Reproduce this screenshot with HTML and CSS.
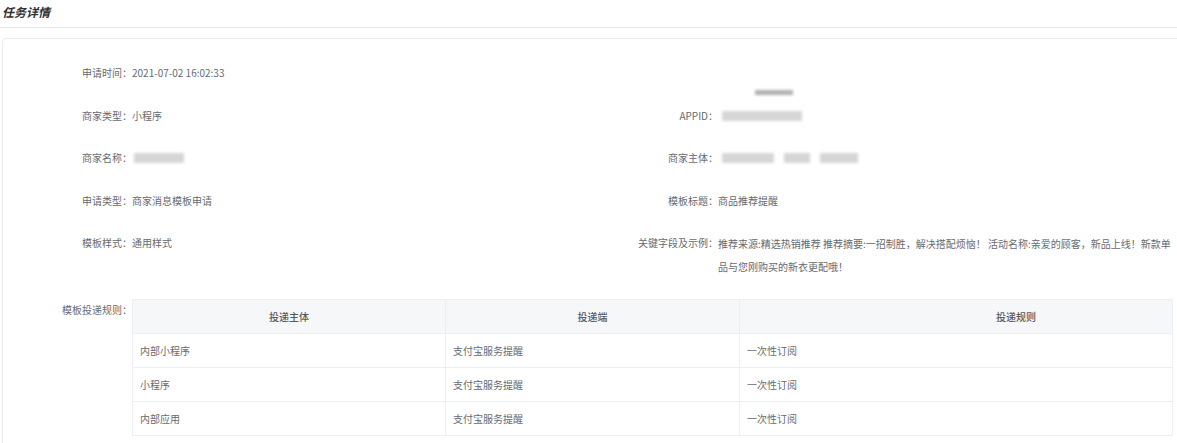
FILE: index.html
```html
<!DOCTYPE html>
<html lang="zh">
<head>
<meta charset="utf-8">
<link rel="stylesheet" href="styles.css">
</head>
<body>
<div class="page">
  <div class="title">任务详情</div>
  <div class="card">
    <span class="redact-top"></span>
    <div class="info">
      <div class="item">
        <span class="label">申请时间：</span>
        <span class="value">2021-07-02 16:02:33</span>
      </div>
      <div class="item"></div>
      <div class="item">
        <span class="label">商家类型：</span>
        <span class="value">小程序</span>
      </div>
      <div class="item">
        <span class="label">APPID：</span>
        <span class="value"><span class="blur b-appid"></span></span>
      </div>
      <div class="item">
        <span class="label">商家名称：</span>
        <span class="value"><span class="blur b-name"></span></span>
      </div>
      <div class="item">
        <span class="label">商家主体：</span>
        <span class="value"><span class="blur b-sub1"></span><span class="blur b-sub2"></span><span class="blur b-sub3"></span></span>
      </div>
      <div class="item">
        <span class="label">申请类型：</span>
        <span class="value">商家消息模板申请</span>
      </div>
      <div class="item">
        <span class="label">模板标题：</span>
        <span class="value">商品推荐提醒</span>
      </div>
      <div class="item">
        <span class="label">模板样式：</span>
        <span class="value">通用样式</span>
      </div>
      <div class="item">
        <span class="label">关键字段及示例：</span>
        <span class="value wrap">推荐来源:精选热销推荐 推荐摘要:一招制胜，解决搭配烦恼！ 活动名称:亲爱的顾客，新品上线！新款单品与您刚购买的新衣更配哦！</span>
      </div>
    </div>
    <div class="rules">
      <span class="label">模板投递规则：</span>
      <table class="table">
        <colgroup>
          <col class="c1"><col class="c2"><col>
        </colgroup>
        <thead>
          <tr><th>投递主体</th><th>投递端</th><th class="th3">投递规则</th></tr>
        </thead>
        <tbody>
          <tr><td>内部小程序</td><td>支付宝服务提醒</td><td>一次性订阅</td></tr>
          <tr><td>小程序</td><td>支付宝服务提醒</td><td>一次性订阅</td></tr>
          <tr><td>内部应用</td><td>支付宝服务提醒</td><td>一次性订阅</td></tr>
        </tbody>
      </table>
    </div>
  </div>
</div>
</body>
</html>
```

FILE: styles.css
```css
html, body {
  margin: 0;
  padding: 0;
  background: #ffffff;
  overflow: hidden;
}
body {
  font-family: "Noto Sans CJK SC", "Noto Sans", sans-serif;
  font-size: 10px;
  color: #666a70;
}
.page {
  width: 1177px;
  height: 443px;
  overflow: hidden;
}
.title {
  height: 28px;
  line-height: 24px;
  padding-left: 2px;
  font-size: 12px;
  font-weight: bold;
  font-style: italic;
  color: #303133;
  border-bottom: 1px solid #e4e7ed;
  box-sizing: border-box;
}
.card {
  position: relative;
  margin: 10px 0 0 2px;
  width: 1200px;
  height: 420px;
  border: 1px solid #e9ebef;
  border-radius: 4px;
  box-sizing: border-box;
  padding-top: 23px;
}
.redact-top {
  position: absolute;
  left: 752px;
  top: 51px;
  width: 38px;
  height: 5px;
  background: #7a7a7a;
  filter: blur(1.5px);
  opacity: 0.6;
}
.info {
  display: grid;
  grid-template-columns: 586px 586px;
  row-gap: 20.5px;
}
.item {
  display: flex;
  align-items: flex-start;
  line-height: 22px;
  min-height: 22px;
}
.label {
  flex: 0 0 129px;
  width: 129px;
  text-align: right;
  color: #666a70;
}
.value {
  flex: 1;
  display: flex;
  align-items: center;
  min-height: 22px;
}
.value.wrap {
  display: block;
  line-height: 23px;
}
.blur {
  display: inline-block;
  height: 10px;
  background: #d6d6d6;
  filter: blur(1.5px);
}
.b-appid { width: 80px; margin-left: 4px; }
.b-name { width: 50px; margin-left: 2px; }
.b-sub1 { width: 52px; margin-left: 4px; }
.b-sub2 { width: 26px; margin-left: 10px; }
.b-sub3 { width: 38px; margin-left: 10px; }
.rules {
  display: flex;
  margin-top: 21px;
}
.rules .label {
  line-height: 22px;
  flex: 0 0 129px;
}
.table {
  width: 1041px;
  border-collapse: collapse;
  table-layout: fixed;
  border: 1px solid #ebeef5;
}
.c1 { width: 313px; }
.c2 { width: 294px; }
.table th {
  height: 33px;
  background: #f6f7f9;
  font-weight: 500;
  color: #555a62;
  text-align: center;
  border: 1px solid #ebeef5;
  padding: 0;
}
.table th.th3 {
  padding-left: 120px;
}
.table td {
  height: 33px;
  padding: 0 0 0 7px;
  border: 1px solid #ebeef5;
  border-left: none;
  border-right: none;
  color: #666a70;
}
.table td + td {
  border-left: 1px solid #ebeef5;
}
```
